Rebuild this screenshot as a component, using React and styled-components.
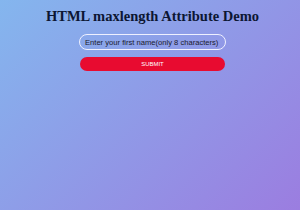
import React from 'react';
import styled, { createGlobalStyle } from 'styled-components';

const GlobalStyle = createGlobalStyle`
  html, body {
    margin: 0;
    padding: 0;
    height: 100%;
  }
  #root {
    height: 100%;
  }
`;

const Page = styled.div`
  box-sizing: border-box;
  min-height: 100%;
  padding: 8px 0 0 5px;
  background: linear-gradient(135deg, #84b6ee 0%, #9b7de0 100%);
  display: flex;
  flex-direction: column;
  align-items: center;
`;

const Title = styled.h1`
  margin: 0;
  font-family: "Liberation Serif", "Times New Roman", serif;
  font-weight: bold;
  font-size: 14.5px;
  line-height: 17px;
  color: #0c1633;
`;

const Form = styled.form`
  margin-top: 9px;
  width: 147px;
  display: flex;
  flex-direction: column;
  gap: 7px;
`;

const TextInput = styled.input`
  box-sizing: border-box;
  width: 100%;
  height: 16px;
  padding: 0 5px;
  border: 1.5px solid #eef0ff;
  border-radius: 8px;
  background: transparent;
  font-family: "Liberation Sans", Arial, sans-serif;
  font-size: 7.6px;
  color: #1a1a2e;
  outline: none;

  &::placeholder {
    color: #1a1a2e;
    opacity: 1;
  }
`;

const SubmitBtn = styled.button`
  box-sizing: border-box;
  margin-left: 1px;
  width: 145px;
  height: 14px;
  padding: 0;
  border: none;
  border-radius: 7px;
  background: #e80b30;
  color: #ffffff;
  font-family: "Liberation Sans", Arial, sans-serif;
  font-size: 5.9px;
  cursor: pointer;
`;

export default function App() {
  return (
    <>
      <GlobalStyle />
      <Page>
        <Title>HTML maxlength Attribute Demo</Title>
        <Form onSubmit={(e) => e.preventDefault()}>
          <TextInput
            type="text"
            name="firstname"
            maxLength={8}
            placeholder="Enter your first name(only 8 characters)"
          />
          <SubmitBtn type="submit">SUBMIT</SubmitBtn>
        </Form>
      </Page>
    </>
  );
}
